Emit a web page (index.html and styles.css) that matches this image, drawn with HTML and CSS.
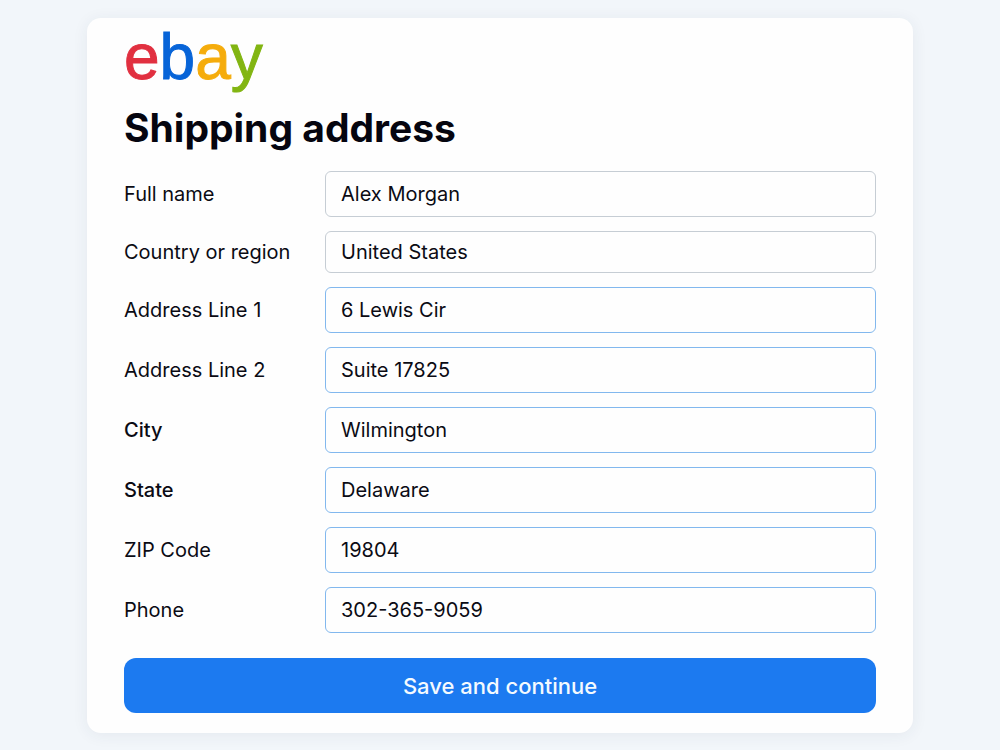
FILE: index.html
```html
<!DOCTYPE html>
<html lang="en">
<head>
  <meta charset="UTF-8">
  <meta name="viewport" content="width=device-width, initial-scale=1.0">
  <title>Shipping address</title>
  <link rel="stylesheet" href="styles.css">
</head>
<body>
  <main class="card">
    <div class="logo"><span class="red">e</span><span class="blue">b</span><span class="yellow">a</span><span class="green">y</span></div>
    <h1>Shipping address</h1>

    <form class="address-form">
      <div class="row">
        <label for="name">Full name</label>
        <input type="text" id="name" value="Alex Morgan">
      </div>
      <div class="row">
        <label for="country">Country or region</label>
        <select id="country">
          <option>United States</option>
        </select>
      </div>
      <div class="row active">
        <label for="address1">Address Line 1</label>
        <input type="text" id="address1" value="6 Lewis Cir">
      </div>
      <div class="row active">
        <label for="address2">Address Line 2</label>
        <input type="text" id="address2" value="Suite 17825">
      </div>
      <div class="row active">
        <label class="strong" for="city">City</label>
        <input type="text" id="city" value="Wilmington">
      </div>
      <div class="row active">
        <label class="strong" for="state">State</label>
        <input type="text" id="state" value="Delaware">
      </div>
      <div class="row active">
        <label for="zip">ZIP Code</label>
        <input type="text" id="zip" value="19804">
      </div>
      <div class="row active">
        <label for="phone">Phone</label>
        <input type="tel" id="phone" value="302-365-9059">
      </div>
      <button type="submit">Save and continue</button>
    </form>
  </main>
</body>
</html>
```
FILE: styles.css
```css
* {
  box-sizing: border-box;
}

body {
  margin: 0;
  padding: 18px 87px 17px;
  font-family: Inter, "Liberation Sans", sans-serif;
  font-size: 20px;
  background-color: #f2f6fa;
  color: #0b0b14;
}

.card {
  padding: 17px 37px 20px;
  background-color: #fefefe;
  border-radius: 14px;
  box-shadow: 0 2px 16px rgba(40, 60, 90, 0.07);
}

.logo {
  font-family: "Liberation Sans", Arial, sans-serif;
  font-size: 64px;
  line-height: 44px;
  -webkit-text-stroke: 1px;
}

.red {
  color: #e13040;
}

.blue {
  color: #0764d8;
}

.yellow {
  color: #f5ac0c;
}

.green {
  color: #82b512;
}

h1 {
  margin: 25px 0 19px;
  font-size: 39px;
  font-weight: 700;
  line-height: 48px;
  color: #05050f;
}

.address-form {
  display: flex;
  flex-direction: column;
  gap: 14px;
}

.row {
  display: flex;
  align-items: center;
}

label {
  width: 201px;
  flex-shrink: 0;
}

.strong {
  font-weight: 500;
}

input,
select {
  flex: 1;
  min-width: 0;
  height: 46px;
  padding: 0 15px;
  font: inherit;
  color: inherit;
  background-color: #fefefe;
  border: 1px solid #c6cdd4;
  border-radius: 6px;
}

select {
  height: 42px;
  appearance: none;
}

.active input {
  border-color: #82b8ee;
}

button {
  height: 55px;
  margin-top: 11px;
  font: inherit;
  font-size: 22px;
  font-weight: 500;
  color: #f4faff;
  background-color: #1c7af0;
  border: none;
  border-radius: 12px;
  cursor: pointer;
}
```
